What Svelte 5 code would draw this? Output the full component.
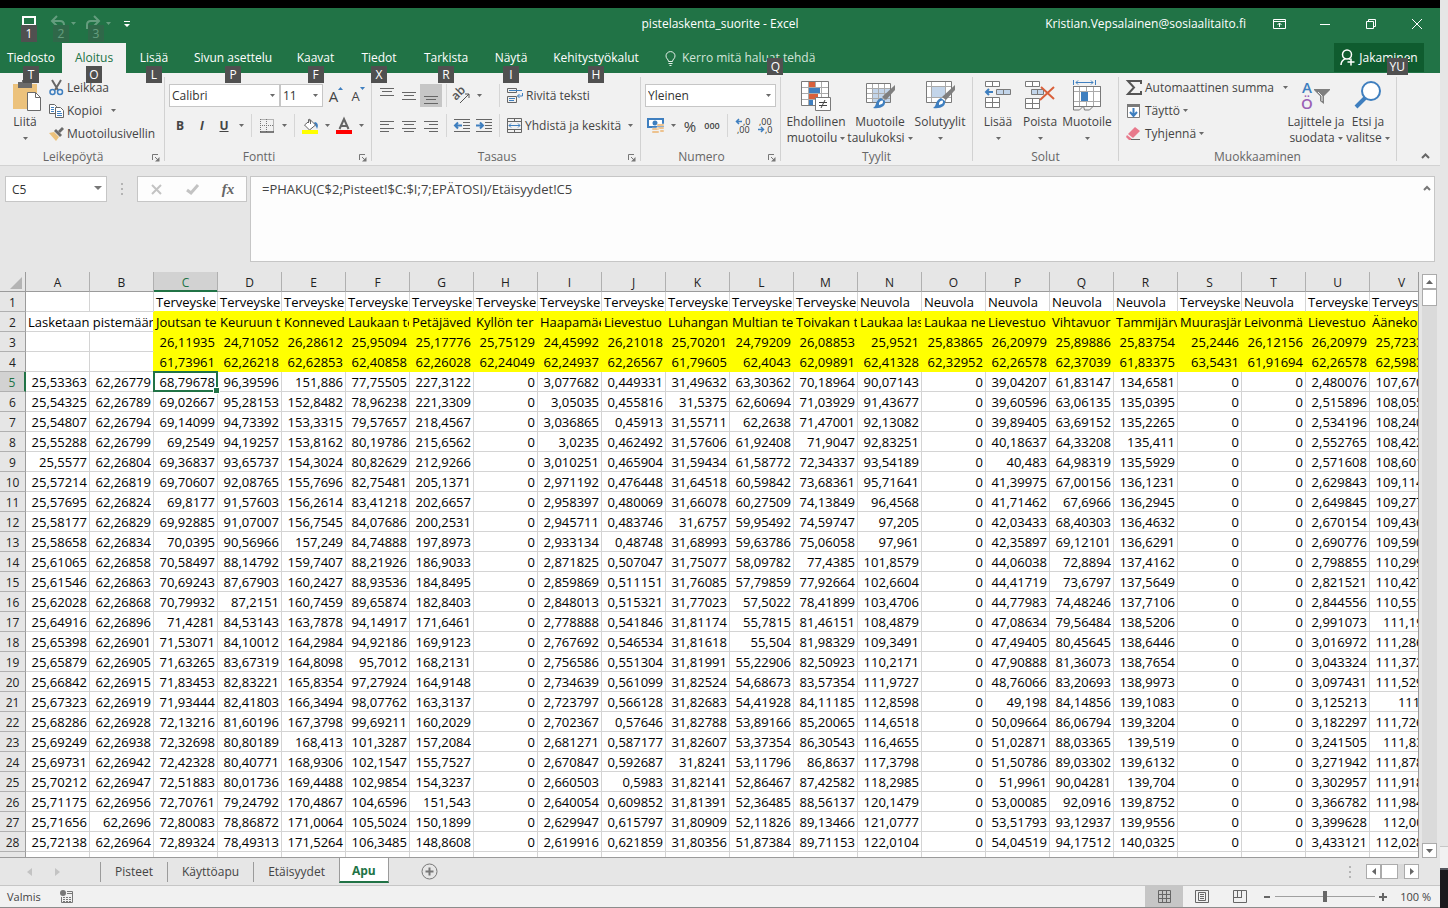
<script>
  const tabs = [
    { label: 'Tiedosto', tip: 'T', width: 62 },
    { label: 'Aloitus', tip: 'O', width: 64 },
    { label: 'Lisää', tip: 'L', width: 56 },
    { label: 'Sivun asettelu', tip: 'P', width: 102 },
    { label: 'Kaavat', tip: 'F', width: 63 },
    { label: 'Tiedot', tip: 'X', width: 64 },
    { label: 'Tarkista', tip: 'R', width: 70 },
    { label: 'Näytä', tip: 'I', width: 60 },
    { label: 'Kehitystyökalut', tip: 'H', width: 110 },
  ]
  let activeTab = $state('Aloitus')

  const sheets = ['Pisteet', 'Käyttöapu', 'Etäisyydet', 'Apu']
  let activeSheet = $state('Apu')

  let cellName = $state('C5')
  let formula = $state('=PHAKU(C$2;Pisteet!$C:$I;7;EPÄTOSI)/Etäisyydet!C5')
  let zoom = $state(100)

  const columns = 'ABCDEFGHIJKLMNOPQRSTUV'.split('')

  const kinds = 'T T T T T T T T T T T N N N N N T N T T'
    .split(' ')
    .map(k => (k === 'T' ? 'Terveyske' : 'Neuvola'))

  const places = [
    'Joutsan te',
    'Keuruun t',
    'Konneved',
    'Laukaan te',
    'Petäjäved',
    'Kyllön ter',
    'Haapamäe',
    'Lievestuo',
    'Luhangan',
    'Multian te',
    'Toivakan t',
    'Laukaa las',
    'Laukaa ne',
    'Lievestuo',
    'Vihtavuor',
    'Tammijärv',
    'Muurasjär',
    'Leivonmä',
    'Lievestuo',
    'Ääneko',
  ]

  const coords = `
26,11935 24,71052 26,28612 25,95094 25,17776 25,75129 24,45992 26,21018 25,70201 24,79209 26,08853 25,9521 25,83865 26,20979 25,89886 25,83754 25,2446 26,12156 26,20979 25,72333
61,73961 62,26218 62,62853 62,40858 62,26028 62,24049 62,24937 62,26567 61,79605 62,4043 62,09891 62,41328 62,32952 62,26578 62,37039 61,83375 63,5431 61,91694 62,26578 62,59833`

  const values = `
25,53363 62,26779 68,79678 96,39596 151,886 77,75505 227,3122 0 3,077682 0,449331 31,49632 63,30362 70,18964 90,07143 0 39,04207 61,83147 134,6581 0 0 2,480076 107,6703
25,54325 62,26789 69,02667 95,28153 152,8482 78,96238 221,3309 0 3,05035 0,455816 31,5375 62,60694 71,03929 91,43677 0 39,60596 63,06135 135,0395 0 0 2,515896 108,0553
25,54807 62,26794 69,14099 94,73392 153,3315 79,57657 218,4567 0 3,036865 0,45913 31,55711 62,2638 71,47001 92,13082 0 39,89405 63,69152 135,2265 0 0 2,534196 108,2403
25,55288 62,26799 69,2549 94,19257 153,8162 80,19786 215,6562 0 3,0235 0,462492 31,57606 61,92408 71,9047 92,83251 0 40,18637 64,33208 135,411 0 0 2,552765 108,4223
25,5577 62,26804 69,36837 93,65737 154,3024 80,82629 212,9266 0 3,010251 0,465904 31,59434 61,58772 72,34337 93,54189 0 40,483 64,98319 135,5929 0 0 2,571608 108,6013
25,57214 62,26819 69,70607 92,08765 155,7696 82,75481 205,1371 0 2,971192 0,476448 31,64518 60,59842 73,68361 95,71641 0 41,39975 67,00156 136,1231 0 0 2,629843 109,1143
25,57695 62,26824 69,8177 91,57603 156,2614 83,41218 202,6657 0 2,958397 0,480069 31,66078 60,27509 74,13849 96,4568 0 41,71462 67,6966 136,2945 0 0 2,649845 109,2773
25,58177 62,26829 69,92885 91,07007 156,7545 84,07686 200,2531 0 2,945711 0,483746 31,6757 59,95492 74,59747 97,205 0 42,03433 68,40303 136,4632 0 0 2,670154 109,4363
25,58658 62,26834 70,0395 90,56966 157,249 84,74888 197,8973 0 2,933134 0,48748 31,68993 59,63786 75,06058 97,961 0 42,35897 69,12101 136,6291 0 0 2,690776 109,5903
25,61065 62,26858 70,58497 88,14792 159,7407 88,21926 186,9033 0 2,871825 0,507047 31,75077 58,09782 77,4385 101,8579 0 44,06038 72,8894 137,4162 0 0 2,798855 110,2993
25,61546 62,26863 70,69243 87,67903 160,2427 88,93536 184,8495 0 2,859869 0,511151 31,76085 57,79859 77,92664 102,6604 0 44,41719 73,6797 137,5649 0 0 2,821521 110,4273
25,62028 62,26868 70,79932 87,2151 160,7459 89,65874 182,8403 0 2,848013 0,515321 31,77023 57,5022 78,41899 103,4706 0 44,77983 74,48246 137,7106 0 0 2,844556 110,5513
25,64916 62,26896 71,4281 84,53143 163,7878 94,14917 171,6461 0 2,778888 0,541846 31,81174 55,7815 81,46151 108,4879 0 47,08634 79,56484 138,5206 0 0 2,991073 111,195
25,65398 62,26901 71,53071 84,10012 164,2984 94,92186 169,9123 0 2,767692 0,546534 31,81618 55,504 81,98329 109,3491 0 47,49405 80,45645 138,6446 0 0 3,016972 111,2863
25,65879 62,26905 71,63265 83,67319 164,8098 95,7012 168,2131 0 2,756586 0,551304 31,81991 55,22906 82,50923 110,2171 0 47,90888 81,36073 138,7654 0 0 3,043324 111,3723
25,66842 62,26915 71,83453 82,83221 165,8354 97,27924 164,9148 0 2,734639 0,561099 31,82524 54,68673 83,57354 111,9727 0 48,76066 83,20693 138,9973 0 0 3,097431 111,5293
25,67323 62,26919 71,93444 82,41803 166,3494 98,07762 163,3137 0 2,723797 0,566128 31,82683 54,41928 84,11185 112,8598 0 49,198 84,14856 139,1083 0 0 3,125213 111,6
25,68286 62,26928 72,13216 81,60196 167,3798 99,69211 160,2029 0 2,702367 0,57646 31,82788 53,89166 85,20065 114,6518 0 50,09664 86,06794 139,3204 0 0 3,182297 111,7263
25,69249 62,26938 72,32698 80,80189 168,413 101,3287 157,2084 0 2,681271 0,587177 31,82607 53,37354 86,30543 116,4655 0 51,02871 88,03365 139,519 0 0 3,241505 111,833
25,69731 62,26942 72,42328 80,40771 168,9306 102,1547 155,7527 0 2,670847 0,592687 31,8241 53,11796 86,8637 117,3798 0 51,50786 89,03302 139,6132 0 0 3,271942 111,8783
25,70212 62,26947 72,51883 80,01736 169,4488 102,9854 154,3237 0 2,660503 0,5983 31,82141 52,86467 87,42582 118,2985 0 51,9961 90,04281 139,704 0 0 3,302957 111,9183
25,71175 62,26956 72,70761 79,24792 170,4867 104,6596 151,543 0 2,640054 0,609852 31,81391 52,36485 88,56137 120,1479 0 53,00085 92,0916 139,8752 0 0 3,366782 111,9843
25,71656 62,2696 72,80083 78,86872 171,0064 105,5024 150,1899 0 2,629947 0,615797 31,80909 52,11826 89,13466 121,0777 0 53,51793 93,12937 139,9556 0 0 3,399628 112,003
25,72138 62,26964 72,89324 78,49313 171,5264 106,3485 148,8608 0 2,619916 0,621859 31,80356 51,87384 89,71153 122,0104 0 54,04519 94,17512 140,0325 0 0 3,433121 112,0283`

  const parse = text => text.trim().split('\n').map(line => line.split(' '))

  const rows = [
    ['', '', ...kinds],
    ['Lasketaan pistemäär', null, ...places],
    ...parse(coords).map(r => ['', '', ...r]),
    ...parse(values),
    columns.map(() => ''),
  ]

  const isText = r => r < 2
  const isYellow = (r, c) => r > 0 && r < 4 && c > 1
</script>

{#snippet caret()}
  <svg class="caret" width="5" height="3" viewBox="0 0 5 3"><path d="M0 0h5L2.5 3z" fill="#6a6a6a" /></svg>
{/snippet}

{#snippet launcher(label)}
  <button class="launcher" aria-label={label}>
    <svg width="8" height="8" viewBox="0 0 8 8" fill="none" stroke="#777">
      <path d="M.5 6V.5H6M3 3l3 3" />
      <path d="M7.5 3v4.5H3z" fill="#777" stroke="none" />
    </svg>
  </button>
{/snippet}

{#snippet lines(ys)}
  <svg width="14" height="16" viewBox="0 0 14 16" stroke="#666">
    {#each ys as [y, x1, x2]}
      <path d="M{x1} {y}.5H{x2}" />
    {/each}
  </svg>
{/snippet}

{#snippet brush()}
  <path d="M31 5v5l-9 10-4-3z" fill="#7f7f7f" />
  <path d="M17 18l4 3c1 5-4 8-12 7 4-2 2-8 8-10z" fill="#3f7fbf" />
  <path d="M15 23c2-3 4-3 4-1s-2 2-4 3z" fill="#fff" />
{/snippet}

<div class="desktop">
  <div class="window">
    <header>
      <div class="titlebar">
        <div class="quick">
          <button class="save" aria-label="Tallenna">
            <svg width="14" height="12" viewBox="0 0 14 12" fill="none" stroke="#fff" stroke-width="2"><path d="M1 12V1h12v11M1 9h12" /></svg>
            <span class="tip">1</span>
          </button>
          <button class="faded" aria-label="Kumoa">
            <svg width="14" height="13" viewBox="0 0 14 13" fill="none" stroke="#fff" stroke-width="2"><path d="M6 0L1 5l5 5M1 5h8q4 0 4 4v4" /></svg>
            <span class="tip">2</span>
            <svg class="more" width="5" height="3" viewBox="0 0 5 3"><path d="M0 0h5L2.5 3z" fill="#fff" /></svg>
          </button>
          <button class="faded" aria-label="Tee uudelleen">
            <svg width="14" height="13" viewBox="0 0 14 13" fill="none" stroke="#fff" stroke-width="2"><path d="M8 0l5 5-5 5M13 5H5Q1 5 1 9v4" /></svg>
            <span class="tip">3</span>
            <svg class="more" width="5" height="3" viewBox="0 0 5 3"><path d="M0 0h5L2.5 3z" fill="#fff" /></svg>
          </button>
          <button class="customize" aria-label="Mukauta pikatyökaluriviä">
            <svg width="6" height="6" viewBox="0 0 6 6" fill="#fff"><path d="M0 0h6v1H0zM0 3h6L3 6z" /></svg>
          </button>
        </div>
        <h1>pistelaskenta_suorite - Excel</h1>
        <div class="account">
          <span>Kristian.Vepsalainen@sosiaalitaito.fi</span>
          <button aria-label="Valintanauhan näyttöasetukset">
            <svg width="13" height="10" viewBox="0 0 13 10" fill="none" stroke="#fff"><path d="M.5.5h12v9H.5zM.5 2.5h12M6.5 8V4M4.500 6l2-2 2 2" /></svg>
          </button>
          <button aria-label="Pienennä">
            <svg width="10" height="10" viewBox="0 0 10 10" stroke="#fff"><path d="M0 5.500h10" /></svg>
          </button>
          <button aria-label="Palauta">
            <svg width="10" height="10" viewBox="0 0 10 10" fill="none" stroke="#fff"><path d="M.5 2.500h7v7h-7zM2.500 2V.5h7v7H8" /></svg>
          </button>
          <button aria-label="Sulje">
            <svg width="10" height="10" viewBox="0 0 10 10" stroke="#fff"><path d="M0 0l10 10M10 0L0 10" /></svg>
          </button>
        </div>
      </div>

      <nav class="tabs">
        {#each tabs as tab}
          <button
            class="tab"
            class:active={tab.label === activeTab}
            style="width:{tab.width}px"
            onclick={() => (activeTab = tab.label)}
          >
            {tab.label}
            <span class="tip">{tab.tip}</span>
          </button>
        {/each}
        <button class="tellme">
          <svg width="11" height="15" viewBox="0 0 11 15" fill="none" stroke="#e4efe8">
            <path d="M3.500 10.500C3.500 8 1 8 1 4.900a4.500 4.300 0 0 1 9 0C10 8 7.500 8 7.500 10.500zM3.500 12.500h4M4.500 14.500h2" />
          </svg>
          Kerro mitä haluat tehdä
          <span class="tip">Q</span>
        </button>
        <button class="share">
          <svg width="15" height="17" viewBox="0 0 15 17" fill="none" stroke="#fff" stroke-width="1.500">
            <circle cx="7" cy="5.500" r="4.500" />
            <path d="M1 16c0-4 2-5 4.500-6.500M9 9.500l1 1M11 9.500v7M7.500 13h7" />
          </svg>
          Jakaminen
          <span class="tip">YU</span>
        </button>
      </nav>
    </header>

    <div class="ribbon">
      <section class="group clipboard">
        <div class="body">
          <button class="big paste">
            <svg width="30" height="32" viewBox="0 0 30 32">
              <path d="M1 4h24v25H1z" fill="#ecc27c" />
              <path d="M6 2h4V0h6v2h4v6H6z" fill="#6a6a6a" />
              <path d="M15.500 12.500h8l5 5v13h-13z" fill="#fff" stroke="#6a6a6a" />
              <path d="M23.500 12.500v5h5" fill="none" stroke="#6a6a6a" />
            </svg>
            <span>Liitä</span>
            <span>{@render caret()}</span>
          </button>
          <div class="stack">
            <button>
              <svg width="15" height="16" viewBox="0 0 15 16" fill="none" stroke="#666" stroke-width="1.500">
                <path d="M3 0l6 10M12 0L6 10" stroke-width="2" />
                <circle cx="3.500" cy="12" r="2.500" stroke="#3f7fbf" />
                <circle cx="11" cy="12" r="2.500" stroke="#3f7fbf" />
              </svg>
              Leikkaa
            </button>
            <button>
              <svg width="15" height="14" viewBox="0 0 15 14" fill="#fff" stroke="#666">
                <path d="M.5.5h5l2 2v7h-7z" />
                <path d="M6.500 3.500h5l3 3v7h-8z" />
                <path d="M2 3.500h3M2 5.500h3M2 7.500h3M8 7.500h4M8 9.500h5M8 11.500h5" stroke="#3f7fbf" />
              </svg>
              Kopioi
              <i class="gap"></i>{@render caret()}
            </button>
            <button>
              <svg width="15" height="14" viewBox="0 0 15 14">
                <path d="M0 6l5-1 5 5-3 4z" fill="#ecc27c" />
                <path d="M5 4l2-2 6 6-2 2z" fill="#6a6a6a" />
                <path d="M9 4l4-4 2 2-4 4z" fill="#6a6a6a" />
              </svg>
              Muotoilusivellin
            </button>
          </div>
        </div>
        <footer>Leikepöytä</footer>
        {@render launcher('Leikepöydän asetukset')}
      </section>

      <section class="group font">
        <div class="body column">
          <div class="tools">
            <label class="combo name">
              <select aria-label="Fontti"><option>Calibri</option></select>
              {@render caret()}
            </label>
            <label class="combo size">
              <select aria-label="Fonttikoko"><option>11</option></select>
              {@render caret()}
            </label>
            <button class="tool grow" aria-label="Suurenna fonttia">
              <span class="letter">A</span><svg width="5" height="10" viewBox="0 0 5 10"><path d="M0 3h5L2.500 0z" fill="#3f7fbf" /></svg>
            </button>
            <button class="tool grow" aria-label="Pienennä fonttia">
              <span class="letter small">A</span><svg width="5" height="10" viewBox="0 0 5 10"><path d="M0 0h5L2.500 3z" fill="#3f7fbf" /></svg>
            </button>
          </div>
          <div class="tools">
            <button class="tool"><b>B</b></button>
            <button class="tool italic"><b>I</b></button>
            <button class="tool underline"><b>U</b></button>
            <button class="drop" aria-label="Alleviivaus">{@render caret()}</button>
            <i class="sep"></i>
            <button class="tool" aria-label="Reunat">
              <svg width="14" height="14" viewBox="0 0 14 14" fill="none" stroke="#777">
                <path d="M.5.5h13v12M.5 0v13M6.500 0v13M0 6.500h13" stroke-dasharray="1 1" />
                <path d="M0 13h14" stroke="#555" stroke-width="1.500" />
              </svg>
            </button>
            <button class="drop" aria-label="Reunavaihtoehdot">{@render caret()}</button>
            <i class="sep"></i>
            <button class="tool" aria-label="Täyttöväri">
              <svg width="17" height="16" viewBox="0 0 17 16">
                <path d="M13 4c4 1 3 5 2 7-1-3-2-4-4-5z" fill="#3f7fbf" />
                <path d="M2.500 7l6-5 5 5-6 5z" fill="#fff" stroke="#666" />
                <path d="M6.500 5V2q0-2 2 0v4" fill="none" stroke="#666" />
                <path d="M0 12h16v4H0z" fill="#ff0" />
              </svg>
            </button>
            <button class="drop" aria-label="Täyttövärit">{@render caret()}</button>
            <button class="tool" aria-label="Fontin väri">
              <svg width="16" height="16" viewBox="0 0 16 16">
                <path d="M3.500 11L8 1l4.500 10M5 8h6" fill="none" stroke="#666" stroke-width="2" />
                <path d="M0 12h16v4H0z" fill="red" />
              </svg>
            </button>
            <button class="drop" aria-label="Fontin värit">{@render caret()}</button>
          </div>
        </div>
        <footer>Fontti</footer>
        {@render launcher('Fonttiasetukset')}
      </section>

      <section class="group align">
        <div class="body column">
          <div class="tools">
            <button class="tool" aria-label="Tasaa ylös">{@render lines([[0, 0, 14], [3, 2, 12], [7, 0, 14]])}</button>
            <button class="tool" aria-label="Keskitä pystysuunnassa">{@render lines([[4, 0, 14], [7, 2, 12], [11, 0, 14]])}</button>
            <button class="tool pressed" aria-label="Tasaa alas">{@render lines([[8, 0, 14], [11, 2, 12], [15, 0, 14]])}</button>
            <i class="sep"></i>
            <button class="tool" aria-label="Suunta">
              <svg width="18" height="16" viewBox="0 0 18 16">
                <text x="0" y="10" transform="rotate(-45 5 8)" font-size="12" font-weight="600" fill="#555">ab</text>
                <path d="M7 15l9-9M12 6h4v4" fill="none" stroke="#555" />
              </svg>
            </button>
            <button class="drop" aria-label="Suuntavaihtoehdot">{@render caret()}</button>
            <i class="sep shift"></i>
            <button class="wide">
              <svg width="16" height="15" viewBox="0 0 16 15" fill="none" stroke="#666">
                <path d="M.5.5h9v4h-9zM.5 8.500h9v6h-9z" />
                <path d="M2 2.500h13M2 10.500h6M2 12.500h5M15.500 5v3h-5M12.500 6l-2 2 2 2" stroke="#3f7fbf" />
              </svg>
              Rivitä teksti
            </button>
          </div>
          <div class="tools">
            <button class="tool" aria-label="Tasaa vasemmalle">{@render lines([[3, 0, 14], [6, 0, 9], [10, 0, 14], [13, 0, 9]])}</button>
            <button class="tool" aria-label="Keskitä">{@render lines([[3, 0, 14], [6, 2, 12], [10, 0, 14], [13, 2, 12]])}</button>
            <button class="tool" aria-label="Tasaa oikealle">{@render lines([[3, 0, 14], [6, 5, 14], [10, 0, 14], [13, 5, 14]])}</button>
            <i class="sep"></i>
            <button class="tool" aria-label="Pienennä sisennystä">
              <svg width="16" height="13" viewBox="0 0 16 13" stroke="#666">
                <path d="M0 .5h16M9 3.500h7M9 6.500h7M9 9.500h7M0 12.500h16" />
                <path d="M1 6.500h7M4 3.500l-3 3 3 3" fill="none" stroke="#3f7fbf" stroke-width="2" />
              </svg>
            </button>
            <button class="tool" aria-label="Suurenna sisennystä">
              <svg width="16" height="13" viewBox="0 0 16 13" stroke="#666">
                <path d="M0 .5h16M9 3.500h7M9 6.500h7M9 9.500h7M0 12.500h16" />
                <path d="M0 6.500h7M4 3.500l3 3-3 3" fill="none" stroke="#3f7fbf" stroke-width="2" />
              </svg>
            </button>
            <i class="sep"></i>
            <button class="wide">
              <svg width="15" height="15" viewBox="0 0 15 15" fill="none" stroke="#666">
                <path d="M.5.5h14v14H.5zM0 3.500h15M0 11.500h15M7.500 0v3M7.500 12v3" />
                <path d="M2 7.500h11M4 5.500l-2 2 2 2M11 5.500l2 2-2 2" stroke="#3f7fbf" />
              </svg>
              Yhdistä ja keskitä
            </button>
            <button class="drop" aria-label="Yhdistämisvaihtoehdot">{@render caret()}</button>
          </div>
        </div>
        <footer>Tasaus</footer>
        {@render launcher('Tasausasetukset')}
      </section>

      <section class="group number">
        <div class="body column">
          <div class="tools">
            <label class="combo format">
              <select aria-label="Lukumuoto"><option>Yleinen</option></select>
              {@render caret()}
            </label>
          </div>
          <div class="tools">
            <button class="tool" aria-label="Laskentamuoto">
              <svg width="18" height="16" viewBox="0 0 18 16">
                <path d="M1 1h15v8H1z" fill="#fff" stroke="#3f7fbf" stroke-width="2" />
                <circle cx="8" cy="5" r="2.500" fill="#3f7fbf" />
                <path d="M10 6h7v2h-7zM10 9h7v2h-7zM5 10h7v2H5zM5 13h7v2H5zM13 12h4v2h-4z" fill="#ecb36f" stroke="#f1f1f1" stroke-width=".5" />
              </svg>
            </button>
            <button class="drop" aria-label="Valuutat">{@render caret()}</button>
            <button class="tool percent">%</button>
            <button class="tool zeros">000</button>
            <i class="sep"></i>
            <button class="tool" aria-label="Lisää desimaaleja">
              <svg width="16" height="16" viewBox="0 0 16 16">
                <path d="M1 3.500h6M4 1L1.500 3.500 4 6" fill="none" stroke="#3f7fbf" stroke-width="1.500" />
                <text x="8" y="7" font-size="9" fill="#333">,0</text>
                <text x="2" y="15" font-size="9" fill="#333">,00</text>
              </svg>
            </button>
            <button class="tool" aria-label="Vähennä desimaaleja">
              <svg width="16" height="16" viewBox="0 0 16 16">
                <path d="M1 11.500h6M4 9l2.500 2.500L4 14" fill="none" stroke="#3f7fbf" stroke-width="1.500" />
                <text x="2" y="7" font-size="9" fill="#333">,00</text>
                <text x="8" y="15" font-size="9" fill="#333">,0</text>
              </svg>
            </button>
          </div>
        </div>
        <footer>Numero</footer>
        {@render launcher('Lukuasetukset')}
      </section>

      <section class="group styles">
        <div class="body">
          <button class="big conditional">
            <svg width="32" height="32" viewBox="0 0 32 32">
              <path d="M1.500 1.500h27v24h-27z" fill="#fff" />
              <path d="M9 2h6v6H9zM9 14h9v6H9z" fill="#d9603b" />
              <path d="M9 8h11v6H9zM9 20h4v6H9z" fill="#3f7fbf" />
              <path d="M8.500 1v25M15.500 1v7M21.500 1v25M1 7.500h28M1 13.500h28M1 19.500h28" stroke="#aaa" />
              <path d="M1.500 1.500h27v24h-27z" fill="none" stroke="#7a7a7a" />
              <path d="M15.500 17.500h15v13h-15z" fill="#fff" stroke="#7a7a7a" />
              <path d="M19 22.500h8M19 25.500h8M25 20l-4 8" stroke="#444" />
            </svg>
            <span>Ehdollinen</span>
            <span>muotoilu {@render caret()}</span>
          </button>
          <button class="big table-format">
            <svg width="32" height="32" viewBox="0 0 32 32">
              <path d="M2.500 3.500h24v19h-24z" fill="#fff" />
              <path d="M9 9h18v14H9z" fill="#c3d5ea" />
              <path d="M8.500 3v20M14.500 3v20M20.500 3v20M2 8.500h25M2 13.500h25M2 18.500h25" stroke="#aaa" />
              <path d="M2.500 3.500h24v19h-24z" fill="none" stroke="#7a7a7a" />
              {@render brush()}
            </svg>
            <span>Muotoile</span>
            <span>taulukoksi {@render caret()}</span>
          </button>
          <button class="big cell-styles">
            <svg width="32" height="32" viewBox="0 0 32 32">
              <path d="M2.500 1.500h25v21h-25z" fill="#fff" />
              <path d="M2 6.500h26M2 17.500h26M7.500 1v22M21.500 1v22" stroke="#aaa" />
              <path d="M8 7h13v10H8z" fill="#c3d5ea" />
              <path d="M2.500 1.500h25v21h-25z" fill="none" stroke="#7a7a7a" />
              {@render brush()}
            </svg>
            <span>Solutyylit</span>
            <span>{@render caret()}</span>
          </button>
        </div>
        <footer>Tyylit</footer>
      </section>

      <section class="group cells">
        <div class="body">
          <button class="big insert">
            <svg width="28" height="32" viewBox="0 0 28 32" fill="#fff" stroke="#7a7a7a">
              <path d="M1.500 1.500h14v5h-14zM8.500 1v5M1.500 17.500h14v10h-14zM8.500 17v10M1 22.500h14" />
              <path d="M12.500 9.500h14v5h-14z" fill="#c3d5ea" />
              <path d="M19.500 9v5" />
              <path d="M2 12h7M5 9l-3 3 3 3" fill="none" stroke="#3f7fbf" stroke-width="2" />
            </svg>
            <span>Lisää</span>
            <span>{@render caret()}</span>
          </button>
          <button class="big delete">
            <svg width="30" height="32" viewBox="0 0 30 32" fill="#fff" stroke="#7a7a7a">
              <path d="M.5 1.500h14v5H.5zM7.500 1v5M.5 18.500h14v10H.5zM7.500 18v10M0 23.500h14" />
              <path d="M6.500 9.500h12v5h-12z" fill="#c3d5ea" />
              <path d="M12.500 9v5" />
              <path d="M16 7l13 12M29 7L15 20" stroke="#d9603b" stroke-width="2" />
            </svg>
            <span>Poista</span>
            <span>{@render caret()}</span>
          </button>
          <button class="big cell-format">
            <svg width="30" height="32" viewBox="0 0 30 32" fill="#fff" stroke="#7a7a7a">
              <path d="M1.500 6.500h27v20h-27z" />
              <path d="M7.500 6v20M21.500 6v20M1 11.500h27M1 21.500h27M14.500 6v20" stroke="#aaa" />
              <path d="M9 12h7v9H9z" fill="#3f7fbf" stroke="none" />
              <path d="M1.500 6.500h27v20M1.500 6v24h6l4-4 1 4h5l4-4" fill="none" />
              <path d="M1.500 0v5M23.500 0v5M4 2.500h17M6 .5l-2 2 2 2M19 .5l2 2-2 2" fill="none" stroke="#3f7fbf" />
            </svg>
            <span>Muotoile</span>
            <span>{@render caret()}</span>
          </button>
        </div>
        <footer>Solut</footer>
      </section>

      <section class="group editing">
        <div class="body">
          <div class="stack">
            <button>
              <svg width="16" height="15" viewBox="0 0 16 15" fill="none" stroke="#555" stroke-width="2"><path d="M15 4V1H2l6 6.500L2 14h13v-3" /></svg>
              Automaattinen summa
              <i class="gap"></i>{@render caret()}
            </button>
            <button>
              <svg width="16" height="16" viewBox="0 0 16 16" fill="#fff" stroke="#7a7a7a">
                <path d="M1.500 1.500h12v13h-12z" />
                <path d="M1 1h13v3H1z" fill="#7a7a7a" stroke="none" />
                <path d="M7.500 5v8M4 9l3.500 4L11 9" fill="none" stroke="#3f7fbf" stroke-width="2" />
              </svg>
              Täyttö {@render caret()}
            </button>
            <button>
              <svg width="16" height="14" viewBox="0 0 16 14">
                <path d="M9 0l5 4-7 7-5-4z" fill="#e8798c" />
                <path d="M1 8l5 4-1 1H3L0 10z" fill="#e8798c" />
                <path d="M5 12.500h9" stroke="#666" />
              </svg>
              Tyhjennä {@render caret()}
            </button>
          </div>
          <button class="big sort">
            <svg width="32" height="32" viewBox="0 0 32 32">
              <text x="2" y="13" font-size="15" font-weight="600" fill="#3f7fbf">A</text>
              <text x="1" y="29" font-size="15" font-weight="600" fill="#9a5fb5">Ö</text>
              <path d="M14 9h16v1l-6 6v8l-4-3v-5l-6-6z" fill="#7f7f7f" />
              <path d="M18 12l4 4v5" fill="none" stroke="#f1f1f1" />
            </svg>
            <span>Lajittele ja</span>
            <span>suodata {@render caret()}</span>
          </button>
          <button class="big find">
            <svg width="30" height="32" viewBox="0 0 30 32" fill="#fff" stroke="#3f7fbf">
              <path d="M3 27l9-9" stroke-width="4" />
              <circle cx="18" cy="11" r="9" stroke-width="2" />
            </svg>
            <span>Etsi ja</span>
            <span>valitse {@render caret()}</span>
          </button>
        </div>
        <footer>Muokkaaminen</footer>
      </section>

      <button class="collapse" aria-label="Tiivistä valintanauha">
        <svg width="9" height="6" viewBox="0 0 9 6" fill="none" stroke="#666" stroke-width="2"><path d="M1 5l3.500-3.500L8 5" /></svg>
      </button>
    </div>

    <div class="formulabar">
      <label class="combo namebox">
        <input aria-label="Nimiruutu" bind:value={cellName} />
        <svg width="8" height="4" viewBox="0 0 8 4"><path d="M0 0h8L4 4z" fill="#777" /></svg>
      </label>
      <svg class="dots" width="2" height="12" viewBox="0 0 2 12"><path d="M0 0h2v2H0zM0 5h2v2H0zM0 10h2v2H0z" fill="#b4b4b4" /></svg>
      <div class="confirm">
        <button aria-label="Peruuta"><svg width="11" height="11" viewBox="0 0 11 11" stroke="#c3c3c3" stroke-width="2"><path d="M1 1l9 9M10 1l-9 9" /></svg></button>
        <button aria-label="Hyväksy"><svg width="13" height="11" viewBox="0 0 13 11" fill="none" stroke="#c3c3c3" stroke-width="3"><path d="M1 6l4 3 7-8" /></svg></button>
        <button class="fx">fx</button>
      </div>
      <div class="formula">
        <textarea aria-label="Kaavarivi" spellcheck="false" bind:value={formula}></textarea>
        <button aria-label="Pienennä kaavarivi">
          <svg width="8" height="6" viewBox="0 0 8 6" fill="none" stroke="#777" stroke-width="2"><path d="M1 5l3-3 3 3" /></svg>
        </button>
      </div>
    </div>

    <main>
      <div class="grid">
        <table>
          <thead>
            <tr>
              <th class="corner" aria-label="Valitse kaikki">
                <svg width="12" height="12" viewBox="0 0 12 12"><path d="M12 0v12H0z" fill="#b4b4b4" /></svg>
              </th>
              {#each columns as column}
                <th class:current={column === 'C'}>{column}</th>
              {/each}
            </tr>
          </thead>
          <tbody>
            {#each rows as row, r}
              <tr>
                <th class:current={r === 4}>{r + 1}</th>
                {#each row as cell, c}
                  {#if cell !== null}
                    <td
                      colspan={r === 1 && c === 0 ? 2 : 1}
                      class:text={isText(r)}
                      class:yellow={isYellow(r, c)}
                      class:above={r === 0 && c > 1}
                      class:beside={r > 0 && r < 4 && c === (r === 1 ? 0 : 1)}
                      class:selected={r === 4 && c === 2}
                    >{cell}</td>
                  {/if}
                {/each}
              </tr>
            {/each}
          </tbody>
        </table>
      </div>
      <div class="scroll vertical">
        <button aria-label="Vieritä ylös"><svg width="7" height="4" viewBox="0 0 7 4"><path d="M0 4h7L3.500 0z" fill="#666" /></svg></button>
        <div class="thumb"></div>
        <div class="track"></div>
        <button aria-label="Vieritä alas"><svg width="7" height="4" viewBox="0 0 7 4"><path d="M0 0h7L3.500 4z" fill="#666" /></svg></button>
      </div>
    </main>

    <div class="sheets">
      <div class="nav">
        <button aria-label="Edellinen taulukko"><svg width="5" height="8" viewBox="0 0 5 8"><path d="M5 0v8L0 4z" fill="#c3c3c3" /></svg></button>
        <button aria-label="Seuraava taulukko"><svg width="5" height="8" viewBox="0 0 5 8"><path d="M0 0v8l5-4z" fill="#c3c3c3" /></svg></button>
      </div>
      {#each sheets as sheet}
        <button class="sheet" class:active={sheet === activeSheet} onclick={() => (activeSheet = sheet)}>{sheet}</button>
      {/each}
      <button class="add" aria-label="Uusi taulukko">
        <svg width="17" height="17" viewBox="0 0 17 17" fill="none" stroke="#777"><circle cx="8.500" cy="8.500" r="7.500" /><path d="M8.500 4.500v8M4.500 8.500h8" stroke-width="2" /></svg>
      </button>
      <svg class="dots" width="2" height="12" viewBox="0 0 2 12"><path d="M0 0h2v2H0zM0 5h2v2H0zM0 10h2v2H0z" fill="#b4b4b4" /></svg>
      <div class="scroll horizontal">
        <button aria-label="Vieritä vasemmalle"><svg width="4" height="7" viewBox="0 0 4 7"><path d="M4 0v7L0 3.500z" fill="#666" /></svg></button>
        <div class="thumb"></div>
        <div class="track"></div>
        <button aria-label="Vieritä oikealle"><svg width="4" height="7" viewBox="0 0 4 7"><path d="M0 0v7l4-3.500z" fill="#666" /></svg></button>
      </div>
    </div>

    <div class="status">
      <span>Valmis</span>
      <button class="macro" aria-label="Tallenna makro">
        <svg width="13" height="13" viewBox="0 0 13 13" fill="none" stroke="#777">
          <path d="M7 1.500h5.500v11H1.500V7M7 3.500h5" />
          <path d="M3 7.500h8M3 9.500h8M3 11.500h8" stroke-dasharray="2 1" />
          <circle cx="3" cy="3" r="3" fill="#777" stroke="none" />
        </svg>
      </button>
      <button class="view first pressed" aria-label="Normaali">
        <svg width="13" height="13" viewBox="0 0 13 13" fill="none" stroke="#666"><path d="M.5.5h12v12H.5zM4.500 0v13M8.500 0v13M0 4.500h13M0 8.500h13" /></svg>
      </button>
      <button class="view" aria-label="Sivun asettelu">
        <svg width="14" height="13" viewBox="0 0 14 13" fill="none" stroke="#666"><path d="M.5.5h13v12H.5zM3.500 2.500h7v8h-7zM5 4.500h4M5 6.500h4M5 8.500h4" /></svg>
      </button>
      <button class="view" aria-label="Sivunvaihdot">
        <svg width="14" height="13" viewBox="0 0 14 13" fill="none" stroke="#666"><path d="M.5.5h13v12H.5zM4.500 0v7.500h4V0M0 7.500h5M8 7.500h1" /></svg>
      </button>
      <button class="step" aria-label="Loitonna"><svg width="8" height="8" viewBox="0 0 8 8"><path d="M1 3h6v2H1z" fill="#666" /></svg></button>
      <input type="range" min="0" max="200" aria-label="Zoomaus" bind:value={zoom} />
      <button class="step" aria-label="Lähennä"><svg width="8" height="8" viewBox="0 0 8 8"><path d="M0 3h8v2H0zM3 0h2v8H3z" fill="#666" /></svg></button>
      <button class="percentage">{zoom} %</button>
    </div>
  </div>

  <!-- edge of the windows behind -->
  <aside>
    <div class="behind"></div>
    <div class="wallpaper"></div>
  </aside>
</div>

<style>
  :global(body) {
    margin: 0;
    background: #e6e6e6;
  }

  .desktop {
    display: flex;
    height: 100vh;
    overflow: hidden;
    font: 12px/16px 'Open Sans', 'Noto Sans', sans-serif;
    color: #444;
  }

  .window {
    flex: 1;
    min-width: 0;
    display: flex;
    flex-direction: column;
    box-sizing: border-box;
    border-top: 8px solid #000;
    border-bottom: 1px solid #8c8c8c;
    background: #e6e6e6;
  }

  button {
    display: flex;
    align-items: center;
    justify-content: center;
    padding: 0;
    border: 0;
    background: none;
    color: inherit;
    font: inherit;
    white-space: nowrap;
  }

  svg {
    display: block;
    flex: none;
    overflow: visible;
  }

  .tip {
    position: absolute;
    z-index: 2;
    min-width: 16px;
    box-sizing: border-box;
    padding: 0 3px;
    background: #505050;
    color: #fff;
    line-height: 17px;
    text-align: center;
  }

  /* title bar */
  header {
    background: #217346;
    color: #fff;
  }

  .titlebar {
    display: grid;
    grid-template-columns: 1fr auto 1fr;
    align-items: center;
    height: 32px;
    padding-bottom: 3px;
  }

  h1 {
    margin: 0;
    font-size: 12px;
    font-weight: 400;
  }

  .quick {
    display: flex;
    padding-left: 20px;
  }

  .quick button {
    position: relative;
    align-items: flex-start;
    justify-content: flex-start;
    width: 35px;
    height: 16px;
  }

  .quick .save {
    width: 31px;
    padding-left: 2px;
  }

  .quick .tip {
    top: 9px;
    left: 1px;
  }

  .quick .faded {
    opacity: 0.3;
  }

  .faded .more {
    margin: 6px 0 0 6px;
  }

  .quick .faded .tip {
    left: 2px;
  }

  .quick .customize {
    padding: 5px 0 0 3px;
  }

  .account {
    display: flex;
    align-items: center;
    justify-content: flex-end;
  }

  .account span {
    margin-right: 10px;
  }

  .account button {
    width: 46px;
    height: 30px;
  }

  .tabs {
    display: flex;
    height: 30px;
  }

  .tab {
    position: relative;
  }

  .tab .tip {
    top: 23px;
    left: 50%;
    margin-left: -8px;
  }

  .tab.active {
    background: #f1f1f1;
    color: #217346;
  }

  .tellme {
    position: relative;
    gap: 6px;
    margin-left: 14px;
    color: #d3e5da;
  }

  .tellme .tip {
    top: 15px;
    right: 32px;
  }

  .share {
    position: relative;
    gap: 4px;
    width: 90px;
    margin: 0 16px 1px auto;
    background: #0f5c2f;
  }

  .share .tip {
    top: 15px;
    right: 16px;
  }

  /* ribbon */
  .ribbon {
    display: flex;
    height: 92px;
    border-bottom: 1px solid #d2d2d2;
    background: #f1f1f1;
  }

  .group {
    position: relative;
    display: flex;
    flex: none;
    flex-direction: column;
    box-sizing: border-box;
    margin: 4px 0;
    padding: 0 4px;
    border-right: 1px solid #d2d2d2;
  }

  .clipboard { width: 165px; }
  .font { width: 207px; }
  .align { width: 269px; }
  .number { width: 140px; }
  .styles { width: 192px; }
  .cells { width: 146px; }
  .editing { width: 278px; }

  .body {
    display: flex;
    flex: 1;
  }

  .body.column {
    flex-direction: column;
    gap: 7px;
    padding-top: 7px;
  }

  footer {
    margin-bottom: -4px;
    padding-right: 18px;
    color: #666;
    text-align: center;
  }

  .styles footer,
  .cells footer,
  .editing footer {
    padding: 0;
  }

  .launcher {
    position: absolute;
    right: 4px;
    bottom: -1px;
  }

  .big {
    flex-direction: column;
    justify-content: flex-start;
    padding-top: 3px;
    line-height: 16px;
  }

  .big span {
    display: flex;
    align-items: center;
    gap: 3px;
    height: 16px;
  }

  .big svg + span {
    margin-top: 2px;
  }

  .paste { width: 42px; }
  .paste > svg { margin-left: 4px; }
  .conditional { width: 62px; }
  .table-format { width: 66px; }
  .cell-styles { width: 54px; }
  .insert { width: 42px; }
  .delete { width: 42px; }
  .cell-format { width: 52px; }
  .sort { width: 56px; margin-left: auto; }
  .find { width: 50px; }

  .stack {
    display: flex;
    flex-direction: column;
    align-items: flex-start;
    margin-top: -1px;
    padding-left: 3px;
  }

  .stack button {
    gap: 3px;
    height: 23px;
  }

  .gap {
    width: 3px;
  }

  .tools {
    display: flex;
    align-items: center;
    height: 23px;
  }

  .tool {
    flex: none;
    width: 22px;
    height: 23px;
  }

  .pressed {
    background: #c6c6c6;
  }

  .drop {
    width: 12px;
    height: 23px;
  }

  .sep {
    width: 1px;
    height: 23px;
    margin: 0 4px;
    background: #d6d6d6;
  }

  .shift {
    margin-left: 14px;
  }

  .wide {
    gap: 3px;
    padding: 0 3px;
  }

  .combo {
    position: relative;
    display: block;
    flex: none;
    box-sizing: border-box;
    height: 23px;
    border: 1px solid #c6c6c6;
    background: #fff;
  }

  .combo select,
  .combo input {
    width: 100%;
    height: 100%;
    box-sizing: border-box;
    padding: 0 2px;
    border: 0;
    outline: 0;
    appearance: none;
    background: none;
    color: #333;
    font: inherit;
  }

  .combo svg {
    position: absolute;
    top: 9px;
    right: 4px;
  }

  .name { width: 111px; }
  .size { width: 43px; }
  .format { width: 131px; }

  .letter {
    font-size: 15px;
  }

  .letter.small {
    font-size: 13px;
  }

  .grow svg {
    margin-bottom: 8px;
  }

  .size + .grow {
    margin-left: 2px;
  }

  .italic {
    font-style: italic;
  }

  .underline {
    text-decoration: underline;
  }

  .percent {
    font-size: 15px;
  }

  .zeros {
    font-size: 9px;
    font-weight: 600;
  }

  .collapse {
    align-self: flex-end;
    margin: 0 10px 6px auto;
  }

  /* formula bar */
  .formulabar {
    display: flex;
    align-items: flex-start;
    height: 86px;
    padding: 10px 5px;
  }

  .namebox {
    width: 102px;
    height: 26px;
  }

  .namebox input {
    padding: 0 6px;
  }

  .formulabar .dots {
    margin: 7px 14px;
  }

  .confirm {
    display: flex;
    box-sizing: border-box;
    width: 110px;
    height: 26px;
    border: 1px solid #c6c6c6;
    background: #fdfdfd;
  }

  .confirm button {
    flex: 1;
  }

  .confirm .fx {
    font: italic 700 15px/20px 'Liberation Serif', serif;
    color: #666;
  }

  .formula {
    display: flex;
    flex: 1;
    align-items: flex-start;
    box-sizing: border-box;
    height: 86px;
    margin-left: 3px;
    border: 1px solid #c6c6c6;
    background: #fdfdfd;
  }

  .formula textarea {
    flex: 1;
    height: 100%;
    box-sizing: border-box;
    padding: 2px 11px;
    border: 0;
    outline: 0;
    resize: none;
    background: none;
    color: #444;
    font: 13px/20px 'Open Sans', 'Noto Sans', sans-serif;
  }

  .formula button {
    margin: 8px 3px;
  }

  /* worksheet */
  main {
    display: flex;
    flex: 1;
    min-height: 0;
  }

  .grid {
    flex: 1;
    overflow: hidden;
    border-right: 1px solid #9b9b9b;
    border-bottom: 1px solid #9b9b9b;
    background: #e6e6e6;
  }

  table {
    width: 1434px;
    table-layout: fixed;
    border-collapse: separate;
    border-spacing: 0;
    font-size: 13px;
    line-height: 17px;
    color: #000;
  }

  th,
  td {
    box-sizing: border-box;
    height: 20px;
    padding: 2px 0 0;
    overflow: hidden;
    white-space: nowrap;
  }

  th {
    background: #e6e6e6;
    border-right: 1px solid #b0b0b0;
    border-bottom: 1px solid #b0b0b0;
    color: #222;
    font-size: 12px;
    font-weight: 400;
    text-align: center;
  }

  thead th {
    padding-top: 1px;
    border-bottom-color: #9b9b9b;
  }

  tbody th {
    border-right-color: #9b9b9b;
  }

  .corner {
    width: 26px;
    border-right-color: #9b9b9b;
  }

  .corner svg {
    margin: 1px 0 0 10px;
  }

  th.current {
    background: #d2d2d2;
    color: #217346;
  }

  thead th.current {
    box-shadow: inset 0 -1px #217346;
    border-bottom-color: #217346;
  }

  tbody th.current {
    border-right: 2px solid #217346;
  }

  td {
    padding: 2px 2px 0;
    border-right: 1px solid #d4d4d4;
    border-bottom: 1px solid #d4d4d4;
    background: #fff;
    text-align: right;
  }

  td.text {
    text-align: left;
  }

  td.yellow {
    background: #ff0;
    border-color: #ff0;
  }

  td.above {
    border-bottom-color: #ff0;
  }

  td.beside {
    border-right-color: #ff0;
  }

  td.selected {
    position: relative;
    overflow: visible;
  }

  td.selected::before {
    content: '';
    position: absolute;
    inset: -1px;
    border: 2px solid #217346;
  }

  td.selected::after {
    content: '';
    position: absolute;
    right: -3px;
    bottom: -3px;
    width: 5px;
    height: 5px;
    border: 1px solid #fff;
    background: #217346;
  }

  .scroll {
    display: flex;
  }

  .scroll button,
  .thumb {
    box-sizing: border-box;
    border: 1px solid #ababab;
    background: #fff;
  }

  .track {
    flex: 1;
    background: #dadada;
  }

  .vertical {
    flex-direction: column;
    width: 15px;
    margin: 2px 3px 0;
  }

  .vertical button {
    height: 15px;
  }

  .vertical .thumb {
    height: 17px;
  }

  .horizontal {
    width: 53px;
    height: 15px;
    margin-right: 21px;
  }

  .horizontal button {
    width: 15px;
  }

  .horizontal .thumb {
    width: 17px;
  }

  /* sheet tabs */
  .sheets {
    display: flex;
    align-items: center;
    height: 27px;
    border-bottom: 1px solid #c6c6c6;
  }

  .nav {
    display: flex;
    gap: 23px;
    width: 73px;
    padding-left: 27px;
  }

  .sheet {
    height: 20px;
    padding: 0 14px;
    border-left: 1px solid #9b9b9b;
  }

  .sheet.active {
    align-self: flex-start;
    height: 25px;
    padding: 2px 12px 0;
    border-right: 1px solid #9b9b9b;
    border-bottom: 2px solid #217346;
    background: #fff;
    color: #217346;
    font-weight: 700;
  }

  .add {
    margin: 0 auto 0 32px;
  }

  .sheets .dots {
    margin-right: 15px;
  }

  /* status bar */
  .status {
    display: flex;
    align-items: center;
    height: 21px;
    padding: 0 9px 0 7px;
    background: #f1f1f1;
  }

  .status span,
  .percentage {
    font-size: 11px;
  }

  .macro {
    margin-left: 19px;
  }

  .view {
    width: 38px;
    height: 21px;
  }

  .view.first {
    margin-left: auto;
  }

  .step {
    width: 12px;
    height: 21px;
  }

  .view + .step {
    margin-left: 2px;
  }

  input[type='range'] {
    width: 100px;
    height: 21px;
    margin: 0 2px;
    appearance: none;
    background: linear-gradient(#a0a0a0, #a0a0a0) center / 100% 1px no-repeat;
  }

  input[type='range']::-webkit-slider-thumb {
    appearance: none;
    width: 4px;
    height: 11px;
    background: #666;
  }

  .percentage {
    justify-content: flex-end;
    width: 42px;
  }

  aside {
    display: flex;
    flex-direction: column;
    justify-content: flex-end;
    width: 8px;
    background: #e6e6e6;
  }

  .behind {
    height: 21px;
    border-top: 1px solid #c6c6c6;
    background: #f1f1f1;
  }

  .wallpaper {
    height: 38px;
    border-top: 2px solid #55585f;
    background: #1b1a1e;
  }
</style>
